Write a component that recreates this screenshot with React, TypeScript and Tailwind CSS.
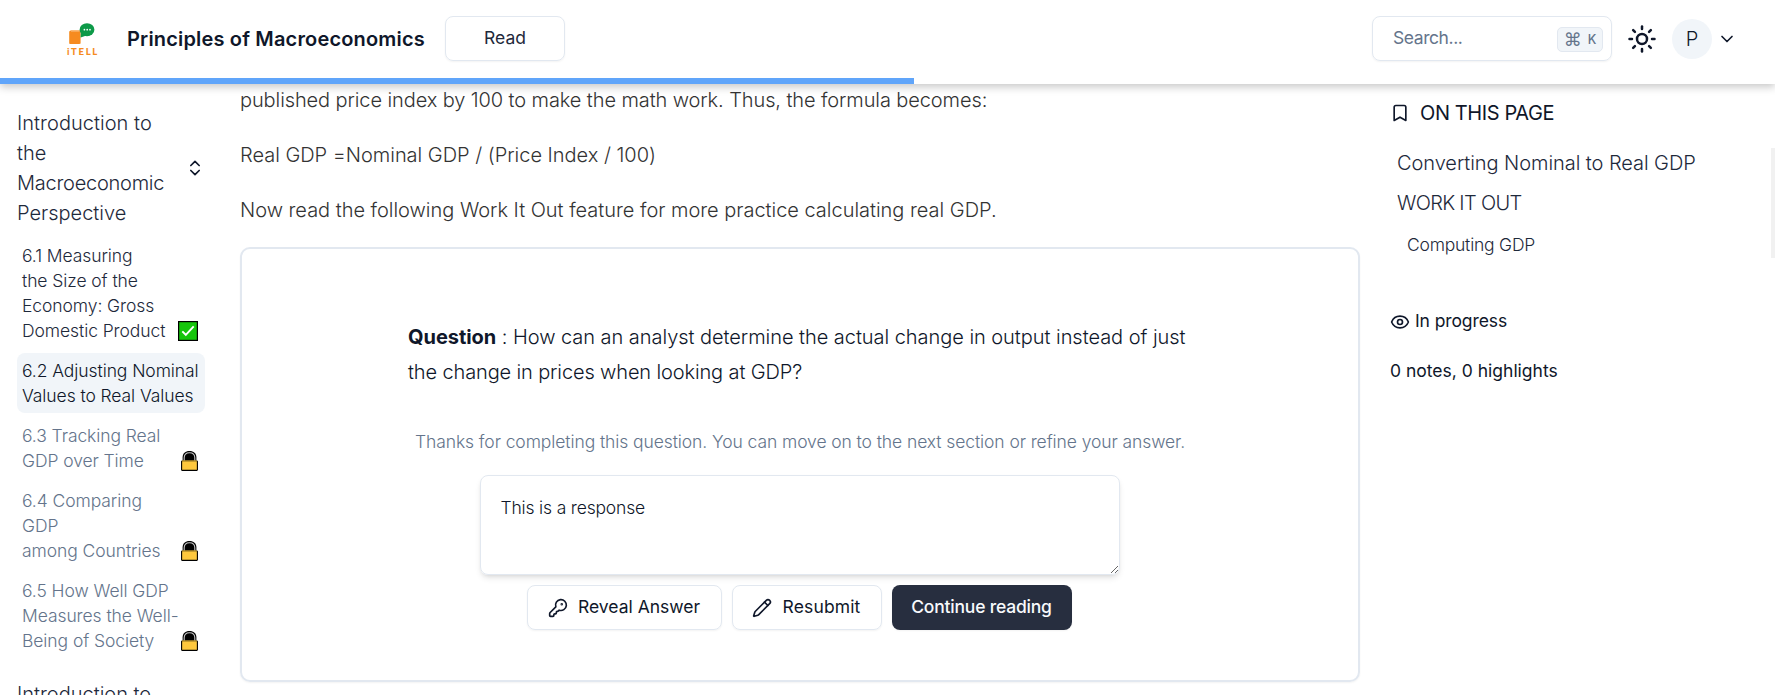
import type { ReactNode } from "react";
import { Bookmark, ChevronDown, ChevronsUpDown, Eye, KeyRound, Pencil, Sun } from "lucide-react";

function Logo() {
  return (
    <div className="flex w-[61px] flex-col items-start">
      <svg className="h-[25px] w-[32px]" viewBox="0 0 32 25">
        <path d="M3.2 10.5 L5 9.3 H13.6 L14.6 10.5 V22.4 L13.4 23 H4 L3.2 22.4 Z" fill="#f68b1f" />
        <path d="M5 10 H13.6" stroke="#fbd3a5" strokeWidth="0.8" />
        <ellipse cx="21" cy="8.7" rx="7.4" ry="6.5" fill="#0d9a48" />
        <path d="M14.8 11.5 L14.6 16.5 L20.5 14.5 Z" fill="#0d9a48" />
        <g fill="#fff">
          <circle cx="18.4" cy="8.7" r="0.85" />
          <circle cx="21.2" cy="8.7" r="0.85" />
          <circle cx="24" cy="8.7" r="0.85" />
        </g>
      </svg>
      <span className="mt-[1px] pl-[1px] font-['Lato'] text-[9.5px] leading-[9px] font-black tracking-[1.7px] text-[#f68b1f]">iTELL</span>
    </div>
  );
}

function Lock() {
  return (
    <svg className="h-5 w-[17px] shrink-0" viewBox="0 0 17 20">
      <path d="M1.6 11 V6.6 C1.6 2.4 4.4 0.1 8.5 0.1 C12.6 0.1 15.4 2.4 15.4 6.6 V11 Z" fill="#000" />
      <path d="M3.2 10 V6.8 C3.2 3.4 5.3 1.7 8.5 1.7 C11.7 1.7 13.8 3.4 13.8 6.8 V10" fill="none" stroke="#c4c4c4" strokeWidth="1.1" />
      <rect x="0.6" y="10" width="15.8" height="9.4" rx="0.6" fill="#ffc83d" stroke="#000" strokeWidth="1.1" />
      <path d="M1.2 10 H15.8" stroke="#ffc83d" strokeWidth="1.1" />
    </svg>
  );
}

function Check() {
  return (
    <svg className="h-5 w-5 shrink-0" viewBox="0 0 20 20">
      <rect x="0.6" y="0.6" width="18.8" height="18.8" fill="#16c60c" stroke="#000" strokeWidth="1.2" />
      <path d="M4.3 10.4 L7.8 13.8 L15.7 5.4" fill="none" stroke="#fff" strokeWidth="1.9" />
    </svg>
  );
}

function Section({ lines, icon, className }: { lines: string[]; icon?: ReactNode; className: string }) {
  return (
    <div className={`flex items-end justify-between rounded-[8px] py-[5px] pr-[7px] pl-[5px] text-[17.5px] leading-[25px] font-[350] tracking-[-0.08px] ${className}`}>
      <div>
        {lines.map((line) => (
          <p key={line} className="whitespace-nowrap">{line}</p>
        ))}
      </div>
      {icon && <div className="flex h-[25px] items-center">{icon}</div>}
    </div>
  );
}

function Chapter({ children }: { children: ReactNode }) {
  return (
    <div className="flex items-center justify-between text-[20px] leading-[30px] font-[350] text-[#1e293b]">
      <div className="w-[160px]">{children}</div>
      <ChevronsUpDown className="size-5 text-[#0f172a]" />
    </div>
  );
}

export default function App() {
  return (
    <div className="flex h-[695px] w-[1775px] flex-col overflow-hidden bg-white font-['Inter',sans-serif] text-[#0f172a]">
      <header className="z-10 h-[84px] shrink-0 bg-white shadow-[0_3px_8px_rgba(0,0,0,0.22)]">
        <div className="flex h-[78px] items-center pr-[38px] pb-[1px] pl-[66px]">
          <Logo />
          <h1 className="w-[318px] text-[20px] font-semibold tracking-[0.17px] whitespace-nowrap">Principles of Macroeconomics</h1>
          <button className="h-[45px] w-[120px] rounded-[8px] border border-[#e2e8f0] text-[17.5px] text-[#1e293b] shadow-xs">Read</button>
          <div className="ml-auto flex items-center">
            <div className="flex h-[45px] w-[240px] items-center justify-between rounded-[8px] border border-[#e2e8f0] pr-[8px] pl-5 shadow-xs">
              <span className="text-[17.5px] tracking-[-0.42px] text-[#64748b]">Search...</span>
              <kbd className="mt-[2px] flex h-[25px] w-[46px] items-center justify-center gap-[6px] rounded-[5px] border border-[#e2e8f0] bg-[#f1f5f9] font-['Inter'] text-[#64748b]">
                <span className="font-['DejaVu_Sans'] text-[18px] leading-none">⌘</span>
                <span className="pt-[2px] text-[12.5px] leading-none font-medium">K</span>
              </kbd>
            </div>
            <Sun className="ml-[15px] size-[30px]" />
            <div className="ml-[15px] flex size-10 items-center justify-center rounded-full bg-[#f1f5f9] text-[20px] font-[350]">P</div>
            <ChevronDown className="ml-[5px] size-5" />
          </div>
        </div>
        <div className="h-[6px] w-[914px] bg-[#60a5fa]" />
      </header>

      <div className="flex min-h-0 flex-1">
        <aside className="w-[240px] shrink-0 pt-6 pr-[35px] pl-[17px]">
          <div className="flex flex-col gap-[10px]">
            <Chapter>
              <p className="tracking-[0.04px]">Introduction to</p>
              <p>the</p>
              <p className="tracking-[-0.25px]">Macroeconomic</p>
              <p>Perspective</p>
            </Chapter>
            <div className="flex flex-col gap-[5px]">
              <Section className="text-[#1e293b]" lines={["6.1 Measuring", "the Size of the", "Economy: Gross", "Domestic Product"]} icon={<Check />} />
              <Section className="bg-[#f1f5f9] text-[#0f172a]" lines={["6.2 Adjusting Nominal", "Values to Real Values"]} />
              <Section className="text-[#64748b]" lines={["6.3 Tracking Real", "GDP over Time"]} icon={<Lock />} />
              <Section className="text-[#64748b]" lines={["6.4 Comparing", "GDP", "among Countries"]} icon={<Lock />} />
              <Section className="text-[#64748b]" lines={["6.5 How Well GDP", "Measures the Well-", "Being of Society"]} icon={<Lock />} />
            </div>
            <div className="mt-[11px] text-[20px] leading-[30px] font-[350] text-[#1e293b]">Introduction to</div>
          </div>
        </aside>

        <main className="w-[1120px] shrink-0">
          <div className="-mt-[1px] flex flex-col gap-5 text-[20px] leading-[35px] font-[350] whitespace-nowrap text-[#333333]">
            <p className="tracking-[-0.1px]">published price index by 100 to make the math work. Thus, the formula becomes:</p>
            <p className="tracking-[-0.02px]">Real GDP =Nominal GDP / (Price Index / 100)</p>
            <p className="tracking-[-0.02px]">Now read the following Work It Out feature for more practice calculating real GDP.</p>
          </div>
          <section className="mt-[19px] flex h-[435px] flex-col items-center rounded-[10px] border-2 border-[#e2e8f0] pt-[71px] shadow-xs">
            <div className="w-[784px] text-[20px] leading-[35px] font-[350] whitespace-nowrap">
              <p className="tracking-[-0.045px]"><b className="font-bold">Question</b> : How can an analyst determine the actual change in output instead of just</p>
              <p className="tracking-[-0.13px]">the change in prices when looking at GDP?</p>
            </div>
            <p className="mt-[39px] text-[17.5px] leading-[25px] font-[350] tracking-[-0.09px] whitespace-nowrap text-[#64748b]">Thanks for completing this question. You can move on to the next section or refine your answer.</p>
            <textarea
              defaultValue="This is a response"
              className="mt-[21px] mr-px h-[100px] w-[640px] shrink-0 rounded-[8px] border border-[#e2e8f0] px-5 py-[19px] text-[17.5px] leading-[25px] font-[350] tracking-[-0.17px] shadow-md"
            />
            <div className="mt-[10px] mr-[2px] flex gap-[10px] text-[17.5px]">
              <button className="flex h-[45px] w-[195px] items-center justify-center gap-[10px] rounded-[8px] border border-[#e2e8f0] shadow-xs">
                <KeyRound className="size-5" />
                <span>Reveal Answer</span>
              </button>
              <button className="flex h-[45px] w-[150px] items-center justify-center gap-[10px] rounded-[8px] border border-[#e2e8f0] shadow-xs">
                <Pencil className="size-5" />
                <span className="tracking-[0.15px]">Resubmit</span>
              </button>
              <button className="h-[45px] w-[180px] rounded-[8px] bg-[#272e3f] font-medium tracking-[-0.2px] text-[#f8fafc] shadow-xs">Continue reading</button>
            </div>
          </section>
        </main>

        <aside className="flex-1 pt-[14px] pl-[30px] whitespace-nowrap">
          <div className="flex h-[30px] items-center text-[20px] tracking-[-0.4px]">
            <Bookmark className="size-5" />
            <span className="ml-[10px]">ON THIS PAGE</span>
          </div>
          <div className="mt-[20px] pl-[7px] text-[20px] leading-[30px] font-[350] text-[#1e293b]">
            <p className="tracking-[-0.06px]">Converting Nominal to Real GDP</p>
            <p className="mt-[10px] tracking-[-0.68px]">WORK IT OUT</p>
            <p className="mt-[12px] pl-[10px] text-[17.5px] tracking-[-0.22px]">Computing GDP</p>
          </div>
          <div className="mt-[48px] flex items-center text-[17.5px] leading-[25px]">
            <Eye className="mt-[3px] size-5" />
            <span className="ml-[5px] tracking-[-0.1px]">In progress</span>
          </div>
          <p className="mt-[25px] text-[17.5px] leading-[25px]">0 notes, 0 highlights</p>
        </aside>
        <div className="mt-16 h-[110px] w-1 bg-[#f1f1f1]" />
      </div>
    </div>
  );
}
